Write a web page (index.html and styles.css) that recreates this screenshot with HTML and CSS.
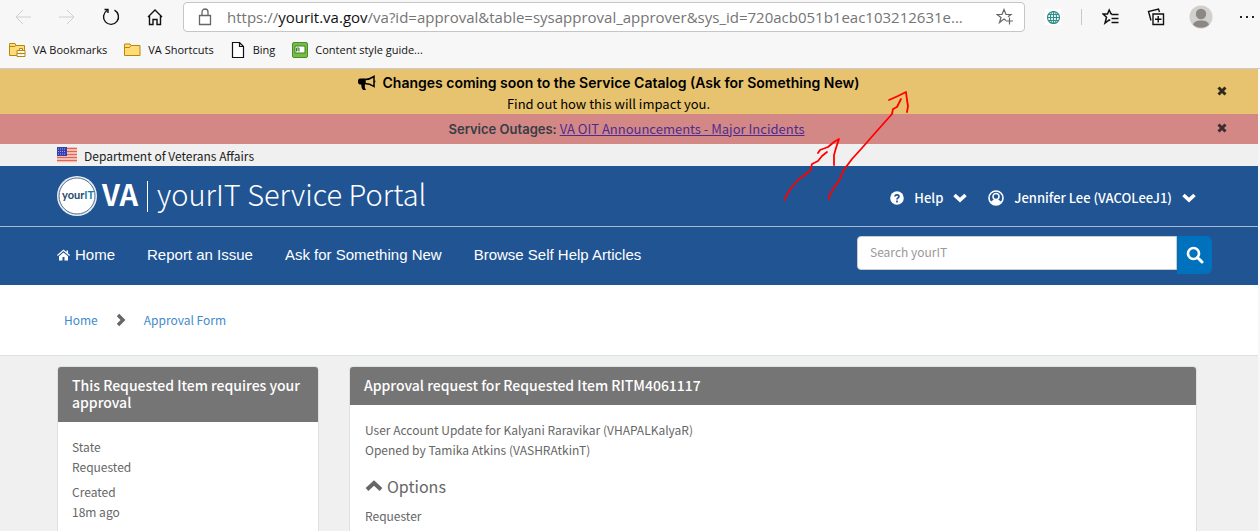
FILE: index.html
```html
<!DOCTYPE html>
<html lang="en">
<head>
<meta charset="utf-8">
<meta name="viewport" content="width=device-width, initial-scale=1">
<title>Approval Form - yourIT Service Portal</title>
<link rel="stylesheet" href="styles.css">
</head>
<body>
<div class="browser">
  <div class="toolbar">
    <button class="tool back" aria-label="Back"><svg width="18" height="18" viewBox="0 0 18 18"><path d="M17 9H2M9 2 2 9l7 7" fill="none" stroke="#cfcfcf"/></svg></button>
    <button class="tool forward" aria-label="Forward"><svg width="18" height="18" viewBox="0 0 18 18"><path d="M1 9h15M9 2l7 7-7 7" fill="none" stroke="#cfcfcf"/></svg></button>
    <button class="tool reload" aria-label="Reload"><svg width="18" height="18" viewBox="0 0 18 18"><path d="M12.500 2.200a7.500 7.500 0 1 1-7.500.3M2.500 1.500H6V5" fill="none" stroke="#111" stroke-width="1.400"/></svg></button>
    <button class="tool home" aria-label="Home page"><svg width="18" height="18" viewBox="0 0 18 18"><path d="m2 9 7-7 7 7M3.500 8v8.500h3.500v-5h4v5h3.500V8" fill="none" stroke="#111" stroke-width="1.400"/></svg></button>
    <div class="address">
      <svg width="14" height="18" viewBox="0 0 14 18"><path d="M1.500 7.500h11v9h-11zM4 7.500V4a3 3 0 0 1 6 0v3.500" fill="none" stroke="#666" stroke-width="1.300"/></svg>
      <div class="url" role="textbox" aria-label="Address">https://<span class="host">yourit.va.gov</span>/va?id=approval&amp;table=sysapproval_approver&amp;sys_id=720acb051b1eac103212631e...</div>
      <button class="tool" aria-label="Add to favorites"><svg width="18" height="18" viewBox="0 0 18 18"><path d="M10 12.500 8 11l-4.500 3.500L5 9.500 1 6.500h5L8 1.500l2 5h5L12 8.800M13.500 9.500v7M10 13h7" fill="none" stroke="#666" stroke-width="1.200"/></svg></button>
    </div>
    <button class="tool globe" aria-label="Translate"><svg width="16" height="16" viewBox="0 0 16 16"><rect width="16" height="16" fill="#fff"/><g fill="none" stroke="#2f8f88" stroke-width="1.200"><circle cx="8.500" cy="8.500" r="6"/><ellipse cx="8.500" cy="8.500" rx="3" ry="6"/><path d="M8.500 2.500v12M2.500 8.500h12M3.500 5.500h10M3.500 11.500h10"/></g></svg></button>
    <span class="divider"></span>
    <button class="tool favs" aria-label="Favorites"><svg width="18" height="18" viewBox="0 0 18 18"><path d="M10 5.800H9L7.200 2 5.500 6H1l3.500 3.200L3 15.200 7.200 12l1 .7M9.500 6.500h7M9.500 10.500h7M9.500 14.500h7" fill="none" stroke="#111" stroke-width="1.500"/></svg></button>
    <button class="tool collections" aria-label="Collections"><svg width="18" height="18" viewBox="0 0 18 18"><path d="M6 6h10.500v10.500H6zM11.200 8v6.500M8 11.200h6.500M4 12.500 1.500 3.500l10-2.500 1 3" fill="none" stroke="#111" stroke-width="1.400"/></svg></button>
    <button class="tool profile" aria-label="Profile"><svg width="24" height="24" viewBox="0 0 24 24"><circle cx="12" cy="12" r="11.500" fill="#d2d0ce"/><circle cx="12" cy="9" r="5.200" fill="#8a8785"/><path d="M4 19.500C5.500 16 8.500 15.500 12 15.500s6.500.5 8 4A11.500 11.500 0 0 1 4 19.500z" fill="#8a8785"/></svg></button>
    <button class="tool more" aria-label="More"><svg width="16" height="4" viewBox="0 0 16 4"><path d="M1 1h2v2H1zM7 1h2v2H7zM13 1h2v2h-2z" fill="#222"/></svg></button>
  </div>
  <nav class="bookmarks" aria-label="Bookmarks">
    <a href="#"><svg width="17" height="16" viewBox="0 0 17 16"><path d="M.5 2.500V13.500h15V3.500H7L6 1.500H.5z" fill="#ffdc78" stroke="#b8860b"/><path d="M.5 4.500h5l1.500-1" fill="none" stroke="#b8860b"/><path d="M8 8.500h8v6H8zM10.500 8.500v-2h3v2M8 11.500h8M12 10.500v2" fill="#fff" stroke="#b8860b"/></svg>VA Bookmarks</a>
    <a href="#"><svg width="17" height="16" viewBox="0 0 17 16"><path d="M.5 2.500V13.500h15.500V3.500H7L6 2H.5z" fill="#ffdc78" stroke="#b8860b"/><path d="M.5 5.500h5l1.500-2" fill="none" stroke="#b8860b"/></svg>VA Shortcuts</a>
    <a href="#"><svg width="15" height="16" viewBox="0 0 15 16"><path d="M1.500.5h7l4 4v11h-11zM8.500.5v4h4" fill="#fff" stroke="#111" stroke-width="1.200"/></svg>Bing</a>
    <a href="#"><svg width="16" height="16" viewBox="0 0 16 16"><rect x=".5" y=".5" width="15" height="15" rx="1.500" fill="#78bd42" stroke="#468e28"/><path d="M3 4h10v7H3z" fill="#fff" stroke="#398028"/><path d="M4.500 9.500V6H7v3.500M4.500 8H7" fill="none" stroke="#398028"/></svg>Content style guide...</a>
  </nav>
</div>

<div class="page">
  <section class="alert alert-change">
    <div class="alert-text">
      <h2><svg width="18" height="15" viewBox="0 0 18 15"><path d="M16 1.500v10C12.500 9 10 8.500 7 8.500V4.500c3 0 5.500-.7 9-3z" fill="none" stroke="#000" stroke-width="1.500"/><path d="M7 3.500H2Q0 3.500 0 6.500T2 9.500h1.200Q3.200 13 5 15h3c-1.200-2-1.500-3.500-1-5.500z"/><path d="M16.500 5q2 1.500 0 3z"/></svg>Changes coming soon to the Service Catalog (Ask for Something New)</h2>
      <p>Find out how this will impact you.</p>
    </div>
    <button class="close" aria-label="Dismiss"><svg width="10" height="10" viewBox="0 0 10 10"><path d="m1.500 1.500 7 7m0-7-7 7" stroke="#302a1c" stroke-width="3"/></svg></button>
  </section>
  <section class="alert alert-outage">
    <p><b>Service Outages:</b> <a href="#">VA OIT Announcements - Major Incidents</a></p>
    <button class="close" aria-label="Dismiss"><svg width="10" height="10" viewBox="0 0 10 10"><path d="m1.500 1.500 7 7m0-7-7 7" stroke="#402c2c" stroke-width="3"/></svg></button>
  </section>

  <div class="gov container">
    <svg width="20" height="16" viewBox="0 0 20 16"><rect width="20" height="16" fill="#f7ded8"/><path d="M0 1.500h20M0 4.500h20M0 7.500h20M0 10.500h20M0 13.500h20" stroke="#e2644f" stroke-width="1.500"/><rect width="10" height="9" fill="#3540b0"/><path d="M1 2h8M1 4.500h8M1 7h8" stroke="#9fa5e0" stroke-dasharray="1 1"/></svg>
    <span>Department of Veterans Affairs</span>
  </div>

  <header class="site">
    <div class="brandbar">
      <div class="container brandrow">
        <a class="brand" href="#">
          <svg width="40" height="40" viewBox="0 0 40 40"><circle cx="20" cy="20" r="20" fill="#e8edf3"/><circle cx="20" cy="20" r="18" fill="#fff" stroke="#536d8d"/><text x="5" y="23" class="logo-text"><tspan fill="#26486b">your</tspan><tspan fill="#1681a8">IT</tspan></text></svg>
          <strong>VA</strong><span class="bar"></span><span class="portal">yourIT Service Portal</span>
        </a>
        <div class="account">
          <button><svg width="14" height="14" viewBox="0 0 14 14"><circle cx="7" cy="7" r="6.800" fill="#fff"/><path d="M5 5.500C5 3.200 9 3.200 9 5.500 9 7 7 6.800 7 8.500M7 9.500v2" fill="none" stroke="#205493" stroke-width="1.700"/></svg><span>Help</span><svg width="14" height="10" viewBox="0 0 14 10"><path d="m1.500 2 5.500 5 5.500-5" fill="none" stroke="#fff" stroke-width="3.600"/></svg></button>
          <button><svg width="16" height="16" viewBox="0 0 16 16"><circle cx="8" cy="8" r="7" fill="none" stroke="#fff" stroke-width="1.600"/><circle cx="8" cy="6.500" r="3" fill="none" stroke="#fff" stroke-width="1.500"/><path d="M2.500 12q2-2 3.500-2.500 2 1.200 4 0 1.500.5 3.500 2.500Q8 17.500 2.500 12z" fill="#fff"/></svg><span>Jennifer Lee (VACOLeeJ1)</span><svg width="14" height="10" viewBox="0 0 14 10"><path d="m1.500 2 5.500 5 5.500-5" fill="none" stroke="#fff" stroke-width="3.600"/></svg></button>
        </div>
      </div>
    </div>
    <div class="container navrow">
      <nav class="menu" aria-label="Main">
        <a href="#"><svg width="13" height="12" viewBox="0 0 13 12"><path d="M6.500.5 0 6l.8.900 5.700-4.800 5.700 4.800L13 6l-2-1.700V1.500H9.500V3z"/><path d="M2 7.200V11.500h3.500V8h2v3.500H11V7.200L6.500 3.500z"/></svg>Home</a>
        <a href="#">Report an Issue</a>
        <a href="#">Ask for Something New</a>
        <a href="#">Browse Self Help Articles</a>
      </nav>
      <form class="search">
        <input type="search" placeholder="Search yourIT" aria-label="Search yourIT">
        <button type="button" aria-label="Search"><svg width="18" height="18" viewBox="0 0 18 18"><circle cx="7.500" cy="7.500" r="5.500" fill="none" stroke="#fff" stroke-width="2.600"/><path d="m11.500 11.500 4.500 4.500" stroke="#fff" stroke-width="3" stroke-linecap="round"/></svg></button>
      </form>
    </div>
  </header>

  <nav class="crumbs" aria-label="Breadcrumb">
    <div class="container crumbrow">
      <a href="#">Home</a>
      <svg width="10" height="14" viewBox="0 0 10 14"><path d="m2 2 5 5-5 5" fill="none" stroke="#666" stroke-width="3.400"/></svg>
      <a href="#">Approval Form</a>
    </div>
  </nav>

  <main class="container panels">
    <aside class="panel side">
      <h2>This Requested Item requires your approval</h2>
      <dl>
        <dt>State</dt><dd>Requested</dd>
        <dt>Created</dt><dd>18m ago</dd>
      </dl>
    </aside>
    <section class="panel request">
      <h2>Approval request for Requested Item RITM4061117</h2>
      <div class="panel-body">
        <p>User Account Update for Kalyani Raravikar (VHAPALKalyaR)</p>
        <p>Opened by Tamika Atkins (VASHRAtkinT)</p>
        <h3><svg width="18" height="12" viewBox="0 0 18 12"><path d="m2 9.500 7-6.500 7 6.500" fill="none" stroke="#666" stroke-width="4"/></svg>Options</h3>
        <p>Requester</p>
      </div>
    </section>
  </main>
</div>

<svg class="annotation" width="130" height="116" viewBox="782 88 130 116" aria-hidden="true"><g fill="none" stroke="#f00" stroke-width="1.800" stroke-linejoin="round" stroke-linecap="round"><path d="m785 200 2-6 5-7 6-7 12-9 2-7 6-3 4-5 5-4M818 153l2-3 8-3 6-5 5-3-3 9-2 7v10"/><path d="m829 199 1-5 10-15 3-8 9-12 10-11 14-16 16-18 1-5 4-2 4-8M889 100l9-4 8-4 1 8 1 6-1 6"/></g></svg>
</body>
</html>
```
FILE: styles.css
```css
* { box-sizing: border-box; }

body {
  margin: 0;
  position: relative;
  min-height: 100vh;
  display: flex;
  flex-direction: column;
  background: #f7f7f7;
  color: #666;
  font: 13px/20px "Noto Sans CJK SC", sans-serif;
}

h2, h3, p, dl, dd { margin: 0; }
button { border: 0; padding: 0; background: none; color: inherit; font: inherit; cursor: pointer; }
a { text-decoration: none; }
svg { flex: none; }

/* Browser frame */
.browser { height: 69px; border-bottom: 1px solid #c9ccd6; color: #111; }
.toolbar { display: flex; align-items: center; height: 34px; padding: 0 5px 0 14px; }
.tool { display: flex; align-items: center; }
.forward { margin-left: 26px; }
.reload { margin-left: 26px; }
.home { margin-left: 26px; }
.address {
  flex: 1;
  min-width: 0;
  display: flex;
  align-items: center;
  height: 30px;
  margin-left: 19px;
  padding: 0 10px 0 14px;
  border: 1px solid #c6c6c6;
  border-radius: 4px;
  background: #fff;
}
.url {
  flex: 1;
  min-width: 0;
  margin-left: 15px;
  overflow: hidden;
  white-space: nowrap;
  color: #757575;
  font: 15px/24px "Open Sans", sans-serif;
}
.host { color: #111; }
.globe { margin-left: 20px; }
.divider { width: 1px; height: 16px; margin-left: 20px; background: #c8c8c8; }
.favs { margin-left: 20px; }
.collections { margin-left: 27px; }
.profile { margin-left: 24px; }
.more { margin-left: 26px; }

.bookmarks { display: flex; gap: 17px; padding-left: 9px; align-items: center; height: 32px; }
.bookmarks a { display: flex; align-items: center; gap: 7px; color: #111; font: 11px/16px "Open Sans", sans-serif; }

/* Portal page */
.page { flex: 1; display: flex; flex-direction: column; margin-right: 2px; background: #f0f0f0; }
.container { padding-left: 57px; padding-right: 46px; }

.alert { display: flex; align-items: center; padding-right: 31px; text-align: center; }
.alert > :first-child { flex: 1; }
.alert-change { height: 45px; background: #e7c36f; color: #000; }
.alert-change h2 { display: flex; justify-content: center; gap: 7px; font: 600 14px/24px Inter, sans-serif; }
.alert-change h2 svg { margin-top: 4px; }
.alert-change p { line-height: 18px; }
.alert-outage { height: 30px; padding-left: 36px; background: #d48886; color: #363d44; }
.alert-outage b { font: 600 13px/20px Inter, sans-serif; }
.alert-outage a { color: #4c2c92; text-decoration: underline; font-size: 13px; }
.close { display: flex; padding-bottom: 2px; }

.gov { display: flex; align-items: center; gap: 7px; height: 22px; color: #212121; font-size: 12px; }
.gov span { padding-top: 2px; }

.site { background: #205493; color: #fff; }
.brandbar { border-bottom: 1px solid #a9bad0; }
.brandrow { display: flex; align-items: center; justify-content: space-between; height: 60px; padding-right: 62px; }
.brand { display: flex; align-items: center; color: #fff; font-size: 29px; line-height: 40px; }
.brand strong, .brand .portal { padding-bottom: 6px; }
.brand strong { margin-left: 5px; font-weight: 700; }
.brand .bar { width: 1px; height: 31px; margin: 0 9px; background: #fff; }
.portal { font-weight: 300; }
.logo-text { font: 700 11px Lato, sans-serif; }
.account { display: flex; gap: 21px; padding-top: 4px; font-weight: 500; }
.account button { display: flex; align-items: center; gap: 10px; }

.navrow { display: flex; align-items: center; justify-content: space-between; height: 58px; padding-bottom: 2px; }
.menu { display: flex; gap: 32px; }
.menu a { display: flex; align-items: center; gap: 5px; color: #fff; font: 15px/20px "Liberation Sans", sans-serif; }
.menu svg { fill: #fff; }
.search { display: flex; align-items: flex-start; width: 355px; }
.search input {
  flex: 1;
  min-width: 0;
  height: 34px;
  padding: 0 12px 3px;
  border: 1px solid #ccc;
  border-radius: 4px 0 0 4px;
  background: #fff;
  font: 12px/20px "Noto Sans CJK SC", sans-serif;
}
.search input::placeholder { color: #999; }
.search button { display: grid; place-items: center; width: 35px; height: 38px; border-radius: 0 6px 6px 0; background: #0071bc; }

.crumbs { background: #fff; border-bottom: 1px solid #dae2e4; }
.crumbrow { display: flex; align-items: center; gap: 18px; height: 70px; padding-left: 64px; font-size: 12px; }
.crumbs a { color: #428bca; }

.panels { flex: 1; display: flex; gap: 30px; padding-top: 10px; padding-right: 61px; }
.panel { border: 1px solid #dae2e4; border-bottom: 0; border-radius: 4px 4px 0 0; background: #fff; overflow: hidden; }
.side { flex: 0 0 262px; }
.request { flex: 1; }
.panel h2 { padding: 10px 14px 11px; background: #757575; color: #fff; font-size: 14px; line-height: 17px; font-weight: 500; }
.panel dl { padding: 15px 14px 0; font-size: 12px; }
.panel-body { padding: 15px 15px 0; font-size: 12px; }
.panel dd { margin-bottom: 5px; }
.panel h3 { display: flex; align-items: center; gap: 4px; margin: 14px 0 8px; font-size: 16px; line-height: 24px; font-weight: 400; }

/* Hand-drawn arrows over the page */
.annotation { position: absolute; left: 782px; top: 88px; pointer-events: none; }
```
